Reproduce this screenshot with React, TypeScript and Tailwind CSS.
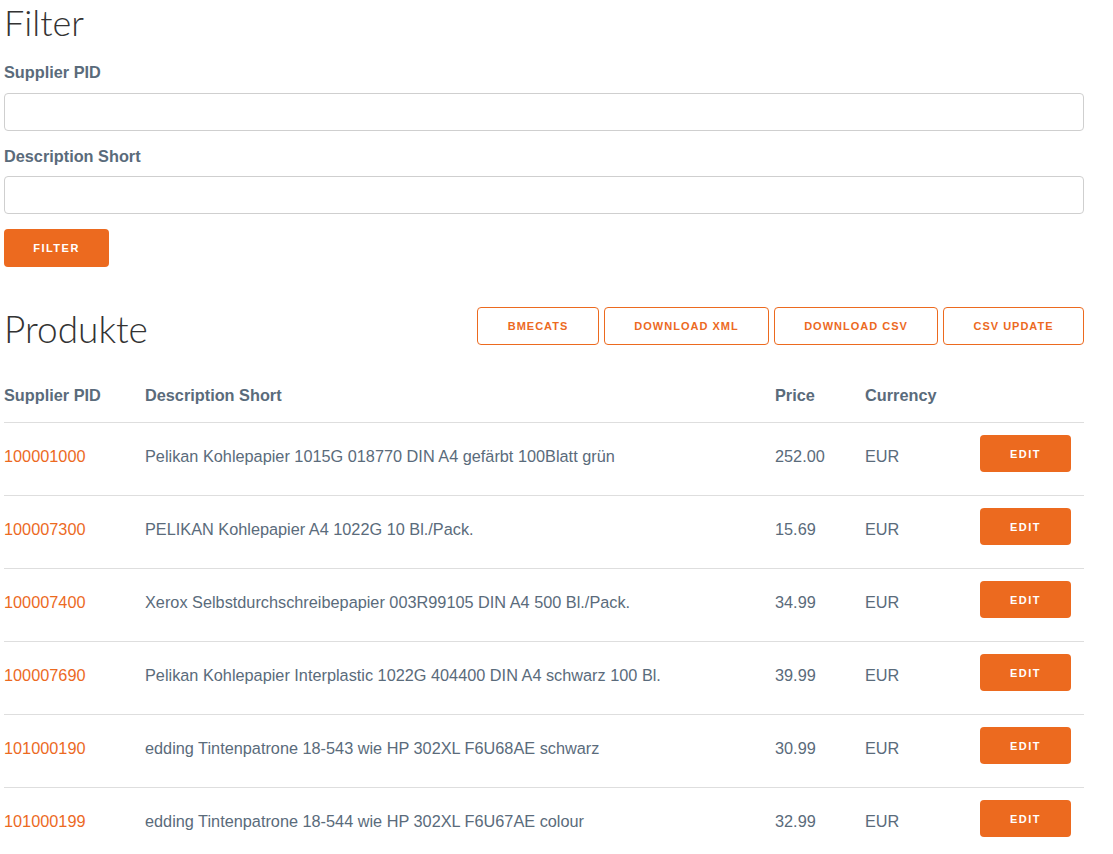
import React from "react";

const products = [
  { pid: "100001000", desc: "Pelikan Kohlepapier 1015G 018770 DIN A4 gefärbt 100Blatt grün", price: "252.00", cur: "EUR" },
  { pid: "100007300", desc: "PELIKAN Kohlepapier A4 1022G 10 Bl./Pack.", price: "15.69", cur: "EUR" },
  { pid: "100007400", desc: "Xerox Selbstdurchschreibepapier 003R99105 DIN A4 500 Bl./Pack.", price: "34.99", cur: "EUR" },
  { pid: "100007690", desc: "Pelikan Kohlepapier Interplastic 1022G 404400 DIN A4 schwarz 100 Bl.", price: "39.99", cur: "EUR" },
  { pid: "101000190", desc: "edding Tintenpatrone 18-543 wie HP 302XL F6U68AE schwarz", price: "30.99", cur: "EUR" },
  { pid: "101000199", desc: "edding Tintenpatrone 18-544 wie HP 302XL F6U67AE colour", price: "32.99", cur: "EUR" },
];

const actions = [
  { label: "BMECATS", w: "w-[122px]" },
  { label: "DOWNLOAD XML", w: "w-[165px]" },
  { label: "DOWNLOAD CSV", w: "w-[164px]" },
  { label: "CSV UPDATE", w: "w-[141px]" },
];

export default function App() {
  return (
    <div className="min-h-screen bg-white pl-[4px] text-[#5a6b7b]" style={{ fontFamily: '"Liberation Sans", Arial, sans-serif' }}>
      <div className="w-[1080px]">
        {/* Filter */}
        <h1 className="text-[36px] leading-[44px] font-light text-[#333]" style={{ fontFamily: 'Lato, "Open Sans", sans-serif' }}>
          Filter
        </h1>
        <label className="mt-[16px] block text-[16.3px] leading-6 font-bold">Supplier PID</label>
        <input className="mt-[9px] block h-[38px] w-full rounded border border-[#cfcfcf] bg-white px-3 outline-none" />
        <label className="mt-[13px] block text-[16.3px] leading-6 font-bold">Description Short</label>
        <input className="mt-[8px] block h-[38px] w-full rounded border border-[#cfcfcf] bg-white px-3 outline-none" />
        <button className="mt-[15px] h-[38px] w-[105px] rounded bg-[#ec6a1f] text-[11px] font-bold tracking-[1.5px] text-white">
          FILTER
        </button>

        {/* Produkte */}
        <div className="mt-[40px] flex h-[38px] items-center justify-between">
          <h2 className="mt-[6px] text-[37px] leading-[44px] font-light text-[#333]" style={{ fontFamily: 'Lato, "Open Sans", sans-serif' }}>
            Produkte
          </h2>
          <div className="flex gap-[5px]">
            {actions.map((a) => (
              <button
                key={a.label}
                className={`${a.w} h-[38px] rounded border border-[#ec6a1f] bg-white text-[11px] font-bold tracking-[1px] text-[#ec6a1f]`}
              >
                {a.label}
              </button>
            ))}
          </div>
        </div>

        <div className="mt-[21px]">
          <div className="grid h-[57px] grid-cols-[141px_630px_90px_115px_1fr] items-start border-b border-[#dedede] pt-[17px] text-[16.3px] leading-6 font-bold">
            <div>Supplier PID</div>
            <div>Description Short</div>
            <div>Price</div>
            <div>Currency</div>
            <div></div>
          </div>
          {products.map((p) => (
            <div
              key={p.pid}
              className="grid h-[73px] grid-cols-[141px_630px_90px_115px_1fr] items-start border-b border-[#dedede] text-[16.3px] leading-6"
            >
              <div className="pt-[21px] text-[#ec6a1f]">{p.pid}</div>
              <div className="pt-[21px]">{p.desc}</div>
              <div className="pt-[21px]">{p.price}</div>
              <div className="pt-[21px]">{p.cur}</div>
              <div className="pt-[12px]">
                <button className="h-[37px] w-[91px] rounded bg-[#ec6a1f] text-[11px] font-bold tracking-[1.5px] text-white">
                  EDIT
                </button>
              </div>
            </div>
          ))}
        </div>
      </div>
    </div>
  );
}
